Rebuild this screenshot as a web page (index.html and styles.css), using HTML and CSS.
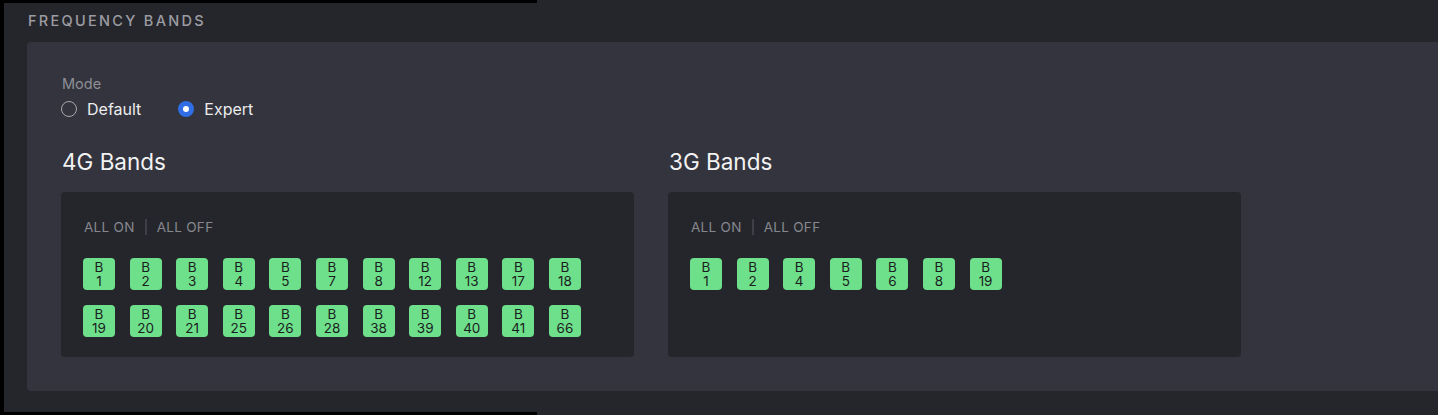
FILE: index.html
```html
<!DOCTYPE html>
<html>
<head>
<meta charset="utf-8">
<link rel="stylesheet" href="styles.css">
</head>
<body>
<div class="page">
  <h1 class="section-title">FREQUENCY BANDS</h1>
  <div class="panel">
    <div class="mode">
      <div class="mode-label">Mode</div>
      <div class="radios">
        <label class="radio"><span class="dot"></span>Default</label>
        <label class="radio checked"><span class="dot"></span>Expert</label>
      </div>
    </div>
    <div class="columns">
      <div class="col">
        <h2 class="col-title">4G Bands</h2>
        <div class="box">
          <div class="toggles"><span>ALL ON</span><span class="sep"></span><span>ALL OFF</span></div>
          <div class="chips">
            <div class="chip">B<br>1</div><div class="chip">B<br>2</div><div class="chip">B<br>3</div><div class="chip">B<br>4</div><div class="chip">B<br>5</div><div class="chip">B<br>7</div><div class="chip">B<br>8</div><div class="chip">B<br>12</div><div class="chip">B<br>13</div><div class="chip">B<br>17</div><div class="chip">B<br>18</div>
            <div class="chip">B<br>19</div><div class="chip">B<br>20</div><div class="chip">B<br>21</div><div class="chip">B<br>25</div><div class="chip">B<br>26</div><div class="chip">B<br>28</div><div class="chip">B<br>38</div><div class="chip">B<br>39</div><div class="chip">B<br>40</div><div class="chip">B<br>41</div><div class="chip">B<br>66</div>
          </div>
        </div>
      </div>
      <div class="col">
        <h2 class="col-title">3G Bands</h2>
        <div class="box">
          <div class="toggles"><span>ALL ON</span><span class="sep"></span><span>ALL OFF</span></div>
          <div class="chips">
            <div class="chip">B<br>1</div><div class="chip">B<br>2</div><div class="chip">B<br>4</div><div class="chip">B<br>5</div><div class="chip">B<br>6</div><div class="chip">B<br>8</div><div class="chip">B<br>19</div>
          </div>
        </div>
      </div>
    </div>
  </div>
</div>
</body>
</html>
```
FILE: styles.css
```css
html, body {
  margin: 0;
  padding: 0;
  background: #000;
}
body {
  font-family: "Inter", "Noto Sans", sans-serif;
  width: 1438px;
  height: 415px;
  overflow: hidden;
}
.page {
  position: relative;
  margin-left: 4px;
  height: 415px;
  background: #25262b;
  padding: 12px 0 0 23px;
  box-sizing: border-box;
}
.page::before {
  content: "";
  position: absolute;
  left: 0;
  top: 0;
  width: 533px;
  height: 3px;
  background: #000;
}
.page::after {
  content: "";
  position: absolute;
  left: 0;
  bottom: 0;
  width: 533px;
  height: 3px;
  background: #000;
}
.section-title {
  margin: 0 0 0 1px;
  font-size: 14.5px;
  font-weight: 500;
  letter-spacing: 2.3px;
  color: #9b9ca2;
  line-height: 18px;
  height: 30px;
}
.panel {
  background: #33343d;
  border-radius: 4px 0 0 4px;
  height: 349px;
  box-sizing: border-box;
  padding: 32px 0 0 34px;
}
.mode-label {
  font-size: 14.5px;
  color: #8e8f96;
  line-height: 20px;
  margin-left: 1px;
}
.radios {
  display: flex;
  gap: 37px;
  margin-top: 1px;
}
.radio {
  display: flex;
  align-items: center;
  gap: 10px;
  font-size: 16px;
  color: #ececee;
  line-height: 28px;
}
.dot {
  width: 16px;
  height: 16px;
  border-radius: 50%;
  border: 1.5px solid #a9aaaf;
  box-sizing: border-box;
}
.radio.checked .dot {
  border: 5.5px solid #2f6ee4;
  background: #fff;
}
.columns {
  display: grid;
  grid-template-columns: 573px 573px;
  column-gap: 34px;
  margin-top: 23px;
}
.col-title {
  margin: 0 0 0 1px;
  font-size: 22.5px;
  font-weight: 400;
  color: #f2f2f3;
  line-height: 32px;
  height: 46px;
}
.box {
  background: #25262b;
  border-radius: 4px;
  height: 165px;
  box-sizing: border-box;
  padding: 27px 22px 0 22px;
}
.toggles {
  display: flex;
  align-items: center;
  gap: 10px;
  font-size: 13.5px;
  letter-spacing: 0.3px;
  color: #86878e;
  line-height: 16px;
  margin-left: 1px;
}
.sep {
  width: 2px;
  height: 16px;
  background: #3f4047;
}
.chips {
  display: grid;
  grid-template-columns: repeat(11, 32px);
  column-gap: 14.6px;
  row-gap: 15px;
  margin-top: 23px;
}
.chip {
  width: 32px;
  height: 32px;
  border-radius: 4px;
  background: #6ee08b;
  color: #1b1c1e;
  font-size: 13.5px;
  line-height: 14.5px;
  text-align: center;
  padding-top: 1.5px;
  box-sizing: border-box;
}
```
